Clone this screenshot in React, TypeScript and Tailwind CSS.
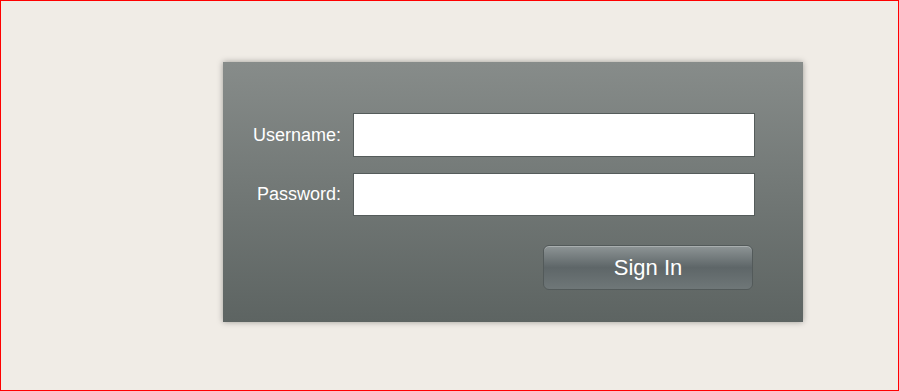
export default function App() {
  return (
    <div className="w-[899px] h-[391px] border border-[#ff0000] bg-[#f0ece6] overflow-hidden" style={{ fontFamily: '"Liberation Sans", Arial, sans-serif' }}>
      <div className="ml-[222px] mt-[61px] w-[580px] h-[260px] bg-gradient-to-b from-[#878c8a] to-[#5d6462] shadow-[0_0_6px_rgba(0,0,0,0.35)] pt-[51px]">
        <div className="flex items-center">
          <label className="w-[118px] text-right text-[18px] text-white">Username:</label>
          <input className="ml-[12px] w-[402px] h-[44px] bg-white border border-[#555c5b] outline-none" />
        </div>
        <div className="flex items-center mt-[16px]">
          <label className="w-[118px] text-right text-[18px] text-white">Password:</label>
          <input type="password" className="ml-[12px] w-[402px] h-[43px] bg-white border border-[#555c5b] outline-none" />
        </div>
        <div className="flex mt-[29px]">
          <button className="ml-[320px] w-[210px] h-[45px] rounded-[6px] border border-[#535a5a] bg-gradient-to-b from-[#8e9596] via-[#5e6668] to-[#6f7778] text-white text-[22px] shadow-[inset_0_1px_0_rgba(255,255,255,0.25)]">
            Sign In
          </button>
        </div>
      </div>
    </div>
  );
}
